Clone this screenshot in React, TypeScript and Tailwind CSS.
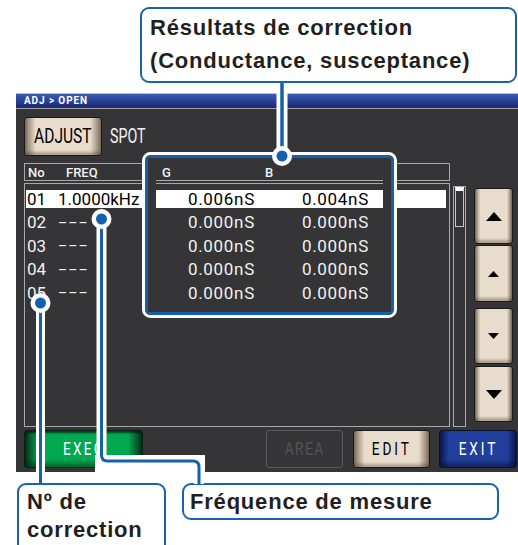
const BLUE = "#1461ad";
const SCREEN = "#353537";

const rows = [
  { no: "01", freq: "1.0000kHz", g: "0.006nS", b: "0.004nS", selected: true },
  { no: "02", freq: "–––", g: "0.000nS", b: "0.000nS" },
  { no: "03", freq: "–––", g: "0.000nS", b: "0.000nS" },
  { no: "04", freq: "–––", g: "0.000nS", b: "0.000nS" },
  { no: "05", freq: "–––", g: "0.000nS", b: "0.000nS" },
];

const beige =
  "border border-[#1a1a1a] rounded-[3px] bg-[linear-gradient(to_right,#7f705f_0%,#e8dccd_14%,#e8dccd_86%,#7f705f_100%)] shadow-[inset_0_-3px_3px_rgba(60,45,30,0.35)]";

export default function App() {
  return (
    <div className="relative w-[518px] h-[545px] overflow-hidden bg-white">
      {/* top callout */}
      <div className="h-[93px] pl-[140px] pt-[7px]">
        <div className="w-[377px] h-[76px] rounded-[9px] border-2 border-[#1763b0] pl-[8px] pt-[3px] font-['Liberation_Sans',Arial,sans-serif] text-[22px] leading-[32.5px] font-bold tracking-[0.8px] text-[#231f20]">
          <div>Résultats de correction</div>
          <div>(Conductance, susceptance)</div>
        </div>
      </div>

      {/* instrument screen */}
      <div className="ml-[16px] w-[502px] h-[379px] bg-[#353537] font-['Roboto',sans-serif] text-[#f2f2f2]">
        <div className="h-[16px] border-t border-t-[#b9c0d6] border-b border-b-[#a3a3a3] bg-[linear-gradient(to_bottom,#3a5cb6,#1b2672)] pl-[8px] text-[10px] font-bold leading-[14px] tracking-[0.9px] text-white">
          ADJ &gt; OPEN
        </div>

        <div className="pl-[8px] pt-[8px]">
          <div className="flex items-center h-[39px]">
            <div
              className={`w-[78px] h-[39px] flex items-center justify-center text-black text-[21px] ${beige}`}
            >
              <span className="inline-block scale-x-[0.74]">ADJUST</span>
            </div>
            <span className="ml-[8px] inline-block origin-left scale-x-[0.68] text-[21px]">
              SPOT
            </span>
          </div>

          <div className="mt-[7px] w-[426px] h-[18px] border border-[#a9a9a9] flex items-center pl-[3px] text-[13px] font-medium leading-none">
            <span className="w-[38px]">No</span>
            <span className="w-[96px]">FREQ</span>
            <span className="w-[103px]">G</span>
            <span>B</span>
          </div>

          <div className="mt-[2px] flex items-start">
            <div className="w-[426px] h-[244px] border border-[#a9a9a9] px-[1px] pt-[6px] flex flex-col gap-[5.5px]">
              {rows.map((r) => (
                <div
                  key={r.no}
                  className={`flex items-center h-[18px] w-[420px] text-[17px] leading-none ${
                    r.selected ? "bg-white text-black" : ""
                  }`}
                >
                  <span className="w-[32px] pl-[1px]">{r.no}</span>
                  <span
                    className={`w-[84px] ${r.selected ? "" : "text-[14px] tracking-[1px]"}`}
                  >
                    {r.freq}
                  </span>
                  <span className="w-[113px] text-right tracking-[0.7px]">
                    {r.g}
                  </span>
                  <span className="w-[114px] text-right tracking-[0.7px]">
                    {r.b}
                  </span>
                </div>
              ))}
            </div>

            <div className="ml-[3px] mt-[3px] w-[13px] h-[241px] border border-[#a9a9a9] px-[1px]">
              <div className="w-[9px] h-[40px] border border-[#c4c4c4] border-t-[4px] border-t-white" />
            </div>

            <div className="ml-[8px] mt-[5px] w-[39px] flex flex-col">
              <ArrowButton dir="up" big className="h-[56px]" />
              <ArrowButton dir="up" className="mt-[1px] h-[57px]" />
              <ArrowButton dir="down" className="mt-[6px] h-[56px]" />
              <ArrowButton dir="down" big className="mt-[2px] h-[56px]" />
            </div>
          </div>

          <div className="mt-[3px] flex h-[38px]">
            <div className="w-[119px] h-[38px] rounded-[3px] border border-[#0b1f12] bg-[linear-gradient(to_right,#07331b_0%,#00a84f_12%,#00a84f_88%,#07331b_100%)] shadow-[inset_0_-4px_4px_rgba(0,30,10,0.45),inset_0_2px_2px_rgba(0,0,0,0.6)] flex items-center justify-center text-white text-[19px]">
              <span className="inline-block scale-x-[0.72] tracking-[3px]">EXEC</span>
            </div>
            <div className="ml-[123px] w-[77px] h-[38px] rounded-[3px] border border-[#5a5a5a] flex items-center justify-center text-[#545454] text-[19px]">
              <span className="inline-block scale-x-[0.72] tracking-[2px]">AREA</span>
            </div>
            <div
              className={`ml-[10px] w-[77px] h-[38px] flex items-center justify-center text-black text-[19px] ${beige}`}
            >
              <span className="inline-block scale-x-[0.72] tracking-[4px]">EDIT</span>
            </div>
            <div className="ml-[9px] w-[78px] h-[38px] rounded-[3px] border border-[#0a0f2a] bg-[linear-gradient(to_right,#0e1a52_0%,#213f9c_12%,#213f9c_88%,#0e1a52_100%)] shadow-[inset_0_-4px_4px_rgba(5,10,40,0.5)] flex items-center justify-center text-white text-[19px]">
              <span className="inline-block scale-x-[0.72] tracking-[4px]">EXIT</span>
            </div>
          </div>
        </div>
      </div>

      {/* bottom callouts */}
      <div className="flex pt-[11px] pl-[17px] font-['Liberation_Sans',Arial,sans-serif] font-bold text-[22px] tracking-[0.8px] text-[#231f20]">
        <div className="w-[149px] h-[80px] rounded-[9px] border-2 border-[#1763b0] pl-[8px] pt-[3px] leading-[28px]">
          <div>Nº de</div>
          <div>correction</div>
        </div>
        <div className="ml-[16px] w-[317px] h-[37px] rounded-[9px] border-2 border-[#1763b0] pl-[6px] pt-[3px] leading-[28px]">
          Fréquence de mesure
        </div>
      </div>

      <Leaders />
    </div>
  );
}

function ArrowButton({
  dir,
  big,
  className,
}: {
  dir: "up" | "down";
  big?: boolean;
  className?: string;
}) {
  const w = big ? 16 : 11;
  const h = big ? 9 : 6;
  const pts =
    dir === "up"
      ? `0,${h} ${w / 2},0 ${w},${h}`
      : `0,0 ${w / 2},${h} ${w},0`;
  return (
    <div className={`w-[39px] flex items-center justify-center ${beige} ${className}`}>
      <svg width={w} height={h} viewBox={`0 0 ${w} ${h}`}>
        <polygon points={pts} fill="#000" />
      </svg>
    </div>
  );
}

function Leaders() {
  const freqPath = "M101.5 219 V455 Q101.5 461 107.5 461 H193 Q199 461 199 467 V484";
  return (
    <svg
      className="absolute inset-0 pointer-events-none"
      width="518"
      height="545"
      viewBox="0 0 518 545"
    >
      {/* frame around G / B results */}
      <rect x="143.5" y="153.5" width="252" height="163" rx="7" fill="none" stroke="#fff" strokeWidth="3" />
      <rect x="146.5" y="156.5" width="246" height="157" rx="5" fill="none" stroke={BLUE} strokeWidth="3" />
      <rect x="152" y="162" width="235" height="146" fill="none" stroke={SCREEN} strokeWidth="8" />

      {/* white halos */}
      <path d="M282 84 V156" stroke="#fff" strokeWidth="11" fill="none" />
      <path d="M40.5 303 V482" stroke="#fff" strokeWidth="9" fill="none" />
      <rect x="95" y="455" width="110" height="17" fill="#fff" />
      <path d={freqPath} stroke="#fff" strokeWidth="10" fill="none" />

      {/* blue leader lines */}
      <path d="M282 83 V156" stroke={BLUE} strokeWidth="3.5" fill="none" />
      <path d="M40.5 303 V484" stroke={BLUE} strokeWidth="3" fill="none" />
      <path d={freqPath} stroke={BLUE} strokeWidth="3" fill="none" />

      {/* dots */}
      {[
        [282, 156],
        [40.5, 303],
        [101.5, 219],
      ].map(([cx, cy]) => (
        <g key={`${cx}-${cy}`}>
          <circle cx={cx} cy={cy} r="10" fill="#fff" />
          <circle cx={cx} cy={cy} r="5.5" fill={BLUE} />
        </g>
      ))}
    </svg>
  );
}
